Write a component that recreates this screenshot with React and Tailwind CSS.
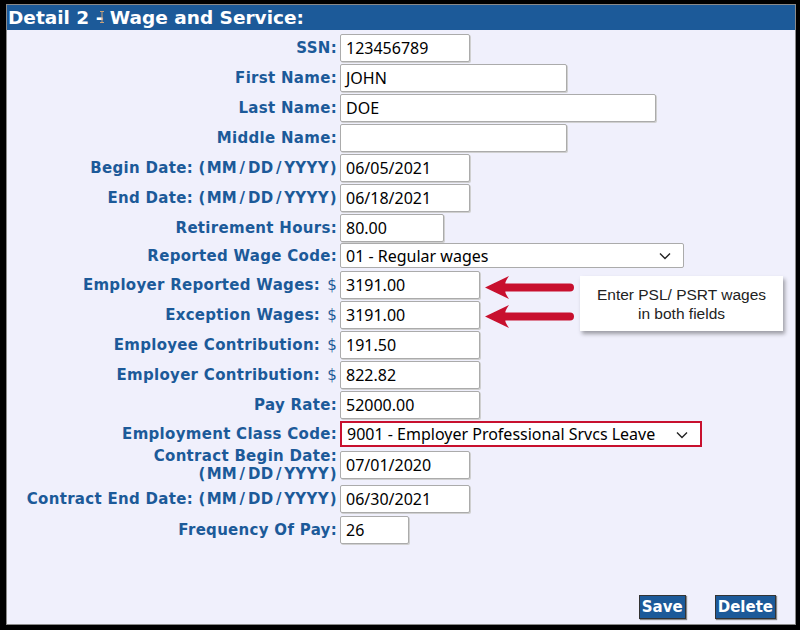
import React from "react";

const LBL =
  "text-[#1c5a99] font-bold text-[15px] leading-[18px] tracking-[0.3px] text-right font-['DejaVu_Sans',Verdana,sans-serif] whitespace-nowrap";

function Fmt() {
  return (
    <>
      <span className="pr-[1px]">(</span>MM<span className="mx-[2.5px]">/</span>DD
      <span className="mx-[2.5px]">/</span>YYYY<span className="pl-[1px]">)</span>
    </>
  );
}

function Field({ w, children }) {
  return (
    <div
      className={`${w} h-[28px] bg-white border border-[#ababab] rounded-[2px] shadow-[1px_1px_0_#d0d0d0] flex items-center pl-[5px] text-[16px] text-black font-['Noto_Sans',sans-serif]`}
    >
      {children}
    </div>
  );
}

function Chevron() {
  return (
    <svg width="12" height="8" viewBox="0 0 12 8" className="absolute right-[12px] top-[8px]">
      <polyline points="1,1.5 6,6.5 11,1.5" fill="none" stroke="#222" strokeWidth="1.4" />
    </svg>
  );
}

function Row({ mt, h = "h-[28px]", label, dollar, children }) {
  return (
    <div className={`flex items-center ${h} ${mt}`}>
      <div className={`w-[330px] shrink-0 ${LBL}`}>
        {label}
        {dollar && <span className="font-normal ml-[7px]">$</span>}
      </div>
      <div className="ml-[3px]">{children}</div>
    </div>
  );
}

function Arrow({ top }) {
  return (
    <svg
      className="absolute left-[484px]"
      style={{ top }}
      width="92"
      height="26"
      viewBox="0 0 92 26"
    >
      <path
        d="M1 12.5 L25 1 Q20.5 7.5 21.5 8.5 L86 8.5 A4 4 0 0 1 86 16.5 L21.5 16.5 Q20.5 17.5 25 24 Z"
        fill="#c8102e"
      />
    </svg>
  );
}

export default function App() {
  return (
    <div className="w-[800px] h-[630px] bg-black pt-[4px] pl-[6px] pr-[4px] pb-[5px] relative">
      <div className="w-full h-full border border-[#8a8a8a] bg-[#f0f0fc] flex flex-col">
        <div className="h-[25px] bg-[#1c5a99] text-white font-bold text-[18.5px] leading-[25px] pl-[1px] font-['DejaVu_Sans',Verdana,sans-serif] whitespace-nowrap">
          Detail 2 - Wage and Service:
        </div>
        <div className="flex flex-col">
          <Row mt="mt-[4px]" label="SSN:">
            <Field w="w-[130px]">123456789</Field>
          </Row>
          <Row mt="mt-[2px]" label="First Name:">
            <Field w="w-[227px]">JOHN</Field>
          </Row>
          <Row mt="mt-[2px]" label="Last Name:">
            <Field w="w-[316px]">DOE</Field>
          </Row>
          <Row mt="mt-[2px]" label="Middle Name:">
            <Field w="w-[227px]"></Field>
          </Row>
          <Row mt="mt-[2px]" label={<>Begin Date: <Fmt /></>}>
            <Field w="w-[130px]">06/05/2021</Field>
          </Row>
          <Row mt="mt-[2px]" label={<>End Date: <Fmt /></>}>
            <Field w="w-[130px]">06/18/2021</Field>
          </Row>
          <Row mt="mt-[2px]" label="Retirement Hours:">
            <Field w="w-[104px]">80.00</Field>
          </Row>
          <Row mt="mt-[1px]" h="h-[25px]" label="Reported Wage Code:">
            <div className="relative w-[344px] h-[25px] bg-white border border-[#ababab] rounded-[2px] flex items-center pl-[5px] text-[16px] text-black font-['Noto_Sans',sans-serif]">
              01 - Regular wages
              <Chevron />
            </div>
          </Row>
          <Row mt="mt-[3px]" label="Employer Reported Wages:" dollar>
            <Field w="w-[140px]">3191.00</Field>
          </Row>
          <Row mt="mt-[2px]" label="Exception Wages:" dollar>
            <Field w="w-[140px]">3191.00</Field>
          </Row>
          <Row mt="mt-[2px]" label="Employee Contribution:" dollar>
            <Field w="w-[140px]">191.50</Field>
          </Row>
          <Row mt="mt-[2px]" label="Employer Contribution:" dollar>
            <Field w="w-[140px]">822.82</Field>
          </Row>
          <Row mt="mt-[2px]" label="Pay Rate:">
            <Field w="w-[140px]">52000.00</Field>
          </Row>
          <Row mt="mt-[2px]" h="h-[26px]" label="Employment Class Code:">
            <div className="relative w-[362px] h-[26px] bg-white border-2 border-[#c8102e] flex items-center pl-[5px] text-[16px] text-black font-['Noto_Sans',sans-serif]">
              9001 - Employer Professional Srvcs Leave
              <Chevron />
            </div>
          </Row>
          <Row
            mt="mt-[4px]"
            label={
              <>
                Contract Begin Date:
                <br />
                <Fmt />
              </>
            }
          >
            <Field w="w-[130px]">07/01/2020</Field>
          </Row>
          <Row mt="mt-[6px]" label={<>Contract End Date: <Fmt /></>}>
            <Field w="w-[130px]">06/30/2021</Field>
          </Row>
          <Row mt="mt-[3px]" label="Frequency Of Pay:">
            <Field w="w-[69px]">26</Field>
          </Row>
        </div>
        <div className="flex justify-end gap-[29px] pr-[19px] mt-[51px]">
          <button className="h-[24px] px-[2px] bg-[#1c5a99] border border-[#333] shadow-[1px_1px_1px_#888] text-white font-bold text-[15px] leading-[20px] font-['DejaVu_Sans',Verdana,sans-serif]">
            Save
          </button>
          <button className="h-[24px] px-[2px] bg-[#1c5a99] border border-[#333] shadow-[1px_1px_1px_#888] text-white font-bold text-[15px] leading-[20px] font-['DejaVu_Sans',Verdana,sans-serif]">
            Delete
          </button>
        </div>
      </div>

      <Arrow top="275px" />
      <Arrow top="304px" />

      <div className="absolute left-[580px] top-[276px] w-[203px] h-[55px] bg-white shadow-[2px_3px_4px_rgba(0,0,0,0.35)] flex flex-col items-center justify-center text-[15.5px] leading-[19px] text-[#222] font-['Liberation_Sans',Arial,sans-serif]">
        <div>Enter PSL/ PSRT wages</div>
        <div>in both fields</div>
      </div>

      <svg className="absolute left-[99px] top-[11px]" width="6" height="12" viewBox="0 0 6 12">
        <path d="M1 0.5 H5 M3 0.5 V11.5 M1 11.5 H5" stroke="#c9a27a" strokeWidth="1" fill="none" />
      </svg>
    </div>
  );
}
